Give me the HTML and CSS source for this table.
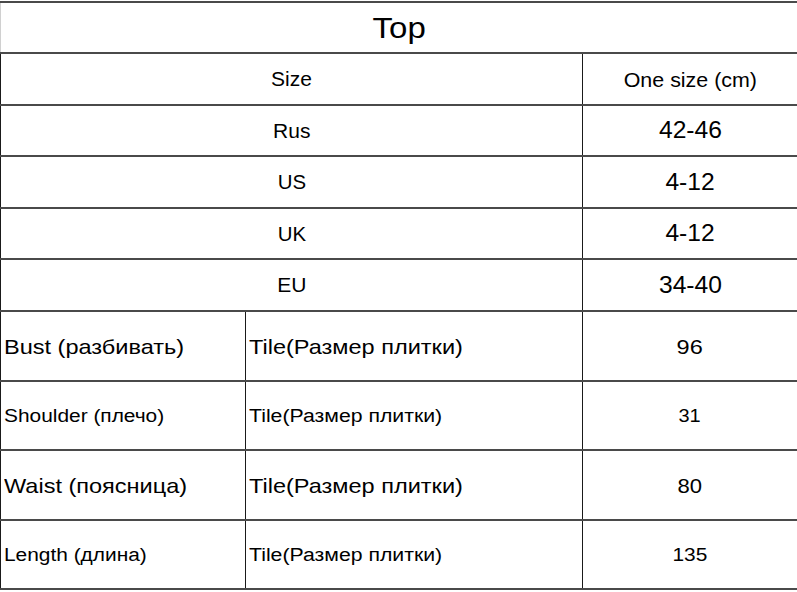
FILE: index.html
```html
<!DOCTYPE html>
<html>
<head>
<meta charset="utf-8">
<link rel="stylesheet" href="styles.css">
</head>
<body>
<table class="size-table">
  <colgroup>
    <col class="c1"><col class="c2"><col class="c3">
  </colgroup>
  <tr class="r-title"><td colspan="3" class="title"><span class="t s110">Top</span></td></tr>
  <tr class="r-head"><td colspan="2" class="center f20"><span class="t s105">Size</span></td><td class="center f21"><span class="t s102">One size (cm)</span></td></tr>
  <tr class="r-a"><td colspan="2" class="center f20"><span class="t s105">Rus</span></td><td class="center f23"><span class="t s107">42-46</span></td></tr>
  <tr class="r-b"><td colspan="2" class="center f20"><span class="t s102">US</span></td><td class="center f23"><span class="t s107">4-12</span></td></tr>
  <tr class="r-a"><td colspan="2" class="center f20"><span class="t s102">UK</span></td><td class="center f23"><span class="t s107">4-12</span></td></tr>
  <tr class="r-b"><td colspan="2" class="center f20"><span class="t s105">EU</span></td><td class="center f23"><span class="t s107">34-40</span></td></tr>
  <tr class="r-m1"><td class="label f21"><span class="t l s112">Bust (разбивать)</span></td><td class="tile f21"><span class="t l s112">Tile(Размер плитки)</span></td><td class="center f21"><span class="t s112">96</span></td></tr>
  <tr class="r-m2"><td class="label f18"><span class="t l s116">Shoulder (плечо)</span></td><td class="tile f18"><span class="t l s118">Tile(Размер плитки)</span></td><td class="center f19"><span class="t s105">31</span></td></tr>
  <tr class="r-m1"><td class="label f21"><span class="t l s112">Waist (поясница)</span></td><td class="tile f21"><span class="t l s112">Tile(Размер плитки)</span></td><td class="center f21"><span class="t s105">80</span></td></tr>
  <tr class="r-m3"><td class="label f18"><span class="t l s116">Length (длина)</span></td><td class="tile f18"><span class="t l s118">Tile(Размер плитки)</span></td><td class="center f19"><span class="t s110">135</span></td></tr>
</table>
</body>
</html>
```
FILE: styles.css
```css
html, body {
  margin: 0;
  padding: 0;
  background: #fff;
}
body {
  padding-top: 1px;
  font-family: "Liberation Sans", Arial, sans-serif;
  color: #000;
}
.size-table {
  width: 797px;
  table-layout: fixed;
  border-collapse: collapse;
  border-left: 1px solid #d0d0d0;
  border-right: 1px solid #d0d0d0;
}
.c1 { width: 245px; }
.c2 { width: 337px; }
.c3 { width: 215px; }
.size-table td {
  padding: 0;
  vertical-align: middle;
  border-top: 2px solid #4a4a4a;
  border-bottom: 2px solid #4a4a4a;
  border-left: 1px solid #1a1a1a;
  border-right: 1px solid #1a1a1a;
  line-height: 1;
  white-space: nowrap;
}
.size-table td.title {
  border-left: 1px solid #d0d0d0;
  border-right: 1px solid #d0d0d0;
}
.r-title { height: 51px; }
.r-head { height: 52px; }
.r-a { height: 51px; }
.r-b { height: 52px; }
.r-m1 { height: 70px; }
.r-m2 { height: 69px; }
.r-m3 { height: 69px; }
.title {
  text-align: center;
  font-size: 30px;
}
.center { text-align: center; }
.size-table td.label { padding-left: 3px; }
.size-table td.tile { padding-left: 3px; }
.t {
  display: inline-block;
  transform-origin: center center;
}
.t.l { transform-origin: left center; }
.s102 { transform: scaleX(1.02); }
.s105 { transform: scaleX(1.05); }
.s107 { transform: scaleX(1.07); }
.s110 { transform: scaleX(1.10); }
.s112 { transform: scaleX(1.12); }
.s116 { transform: scaleX(1.16); }
.s118 { transform: scaleX(1.18); }
.f18 { font-size: 18px; }
.f19 { font-size: 19px; }
.f20 { font-size: 20px; }
.f21 { font-size: 21px; }
.f23 { font-size: 23px; }
```
